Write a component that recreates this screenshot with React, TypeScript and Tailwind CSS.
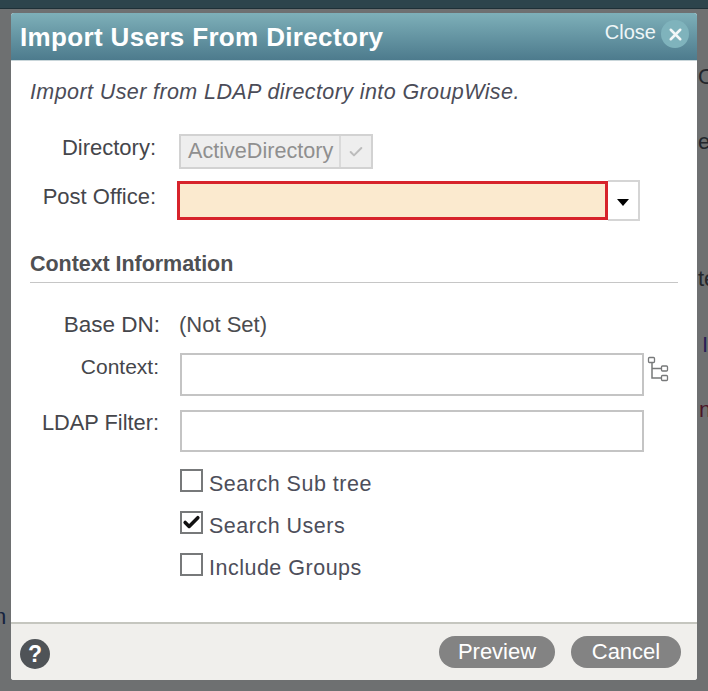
import React from 'react';
import { X, Check } from 'lucide-react';

const font = "font-['Liberation_Sans',Arial,sans-serif]";

const TreeIcon = () => (
  <svg width="22" height="28" viewBox="0 0 22 28" fill="none" stroke="#77797a" strokeWidth="1.3" className="ml-[3px] mt-[3px]">
    <rect x="1.5" y="1.5" width="6" height="5" rx="1" />
    <rect x="14.5" y="10" width="6" height="5" rx="1" />
    <rect x="14.5" y="19.5" width="6" height="5" rx="1" />
    <path d="M5 7v15h9.500M5 12.500h9.500" strokeWidth="1.500" />
  </svg>
);

const Row = ({ label, labelClass, children, className }: { label: string; labelClass?: string; children: React.ReactNode; className?: string }) => (
  <div className={`flex -ml-[19px] ${className ?? ''}`}>
    <div className={`shrink-0 text-right leading-6 text-[#45464b] ${labelClass ?? ''}`}>{label}</div>
    {children}
  </div>
);

const Option = ({ label, checked, className }: { label: string; checked?: boolean; className?: string }) => (
  <div className={`flex items-start ${className ?? ''}`}>
    <div className="w-[23px] h-[23px] border-2 border-[#77797a] bg-white flex items-center justify-center shrink-0">
      {checked && <Check size={19} strokeWidth={4.5} color="#111" />}
    </div>
    <span className="ml-[6px] mt-[3px] text-[21.500px] leading-6 tracking-[0.5px] text-[#4d4e5a]">{label}</span>
  </div>
);

export default function App() {
  return (
    <div className={`relative w-[708px] h-[691px] overflow-hidden bg-[#6e7071] ${font}`}>
      {/* page behind the dialog */}
      <div className="h-[9px] bg-[#2d444c] border-b border-[#1f3037]" />
      <span className="absolute left-[698px] top-[60px] text-[22px] text-[#22262c]">O</span>
      <span className="absolute left-[698px] top-[125px] text-[22px] text-[#22262c]">e</span>
      <span className="absolute left-[698px] top-[262px] text-[22px] text-[#22262c]">te</span>
      <span className="absolute left-[702px] top-[328px] text-[22px] text-[#2a1f55]">I</span>
      <span className="absolute left-[699px] top-[393px] text-[22px] text-[#4a1528]">n</span>
      <span className="absolute left-0 top-[600px] -ml-[6px] text-[22px] text-[#16233f]">n</span>

      {/* dialog */}
      <div className="relative ml-[11px] mt-[4px] w-[686px] h-[667px] flex flex-col rounded-[3px] overflow-hidden bg-white">
        <div className="h-[48px] shrink-0 flex justify-between bg-gradient-to-b from-[#7eb0b9] to-[#4d7b8d] border-b border-[#c9d6da]">
          <div className="ml-[9px] mt-[8px] text-[26px] leading-8 font-bold text-white tracking-[0.35px]">Import Users From Directory</div>
          <div className="flex items-start">
            <span className="mt-[7px] text-[20px] leading-6 text-[#eef6f7]">Close</span>
            <div className="ml-[5px] mr-[8px] mt-[7px] w-[28px] h-[28px] rounded-full bg-[#7fb3bc] flex items-center justify-center">
              <X size={19} strokeWidth={3.2} color="#f3f8f8" />
            </div>
          </div>
        </div>

        <div className="flex-1 flex flex-col px-[19px]">
          <div className="mt-[19px] text-[21.500px] leading-6 italic text-[#4b4c58] tracking-[0.4px]">Import User from LDAP directory into GroupWise.</div>

          <Row label="Directory:" labelClass="w-[145px] text-[22px] pt-[2px]" className="mt-[30px]">
            <div className="ml-[23px] w-[194px] h-[35px] flex border-2 border-[#d2d2d2] bg-[#eeeeee]">
              <span className="ml-[7px] mt-[3px] text-[21.600px] leading-6 text-[#8f8f8f] whitespace-nowrap">ActiveDirectory</span>
              <div className="ml-auto w-[32px] border-l-2 border-[#dadada] flex items-center justify-center">
                <Check size={16} strokeWidth={3} color="#bcbcbc" />
              </div>
            </div>
          </Row>

          <Row label="Post Office:" labelClass="w-[145px] text-[22px] pt-[4px]" className="mt-[12px]">
            <div className="ml-[21px] w-[431px] h-[39px] bg-[#fbeacf] border-[3px] border-[#d7232b]" />
            <div className="w-[32px] h-[41px] -mt-[1px] border-2 border-l-0 border-[#d5d5d5] flex items-center justify-center">
              <div className="mt-[4px] w-0 h-0 border-x-[6px] border-x-transparent border-t-[7px] border-t-black" />
            </div>
          </Row>

          <div className="mt-[29px] pb-[4px] border-b border-[#c6c6c6] text-[21.500px] leading-7 font-bold text-[#4f5053] -tracking-[0.05px]">Context Information</div>

          <Row label="Base DN:" labelClass="w-[149px] text-[22.500px]" className="mt-[30px]">
            <span className="ml-[19px] text-[22px] leading-6 text-[#4b4c50]">(Not Set)</span>
          </Row>

          <Row label="Context:" labelClass="w-[148px] text-[21px] pt-[2px]" className="mt-[16px]">
            <div className="ml-[21px] w-[464px] h-[43px] border-2 border-[#c4c4c4] bg-white" />
            <TreeIcon />
          </Row>

          <Row label="LDAP Filter:" labelClass="w-[148px] text-[21.800px] pt-[1px]" className="mt-[14px]">
            <div className="ml-[21px] w-[464px] h-[42px] border-2 border-[#c4c4c4] bg-white" />
          </Row>

          <div className="ml-[150px] mt-[17px] flex flex-col gap-[15px]">
            <Option label="Search Sub tree" />
            <Option label="Search Users" checked />
            <Option label="Include Groups" />
          </div>
        </div>

        <div className="h-[58px] shrink-0 border-t-2 border-[#c5c6bf] bg-[#f0efec] flex items-center justify-between">
          <div className="ml-[9px] mt-[4px] w-[30px] h-[30px] rounded-full bg-[#4f5357] flex items-center justify-center text-white text-[23px] font-bold leading-none">?</div>
          <div className="flex mr-[16px] gap-[16px]">
            <div className="w-[116px] h-[32px] rounded-full bg-[#838383] text-center text-white text-[22px] leading-[31px]">Preview</div>
            <div className="w-[110px] h-[32px] rounded-full bg-[#838383] text-center text-white text-[22px] leading-[31px]">Cancel</div>
          </div>
        </div>
      </div>
    </div>
  );
}
